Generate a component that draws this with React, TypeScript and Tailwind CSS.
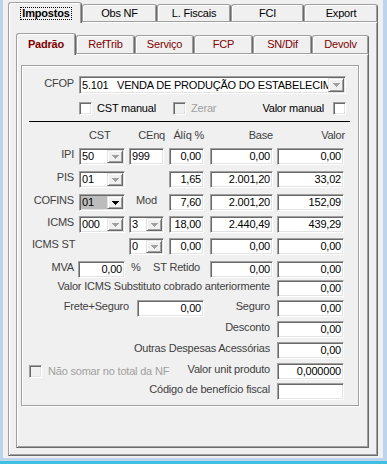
import React from "react";

const sunken =
  "border border-t-[#a0a0a0] border-l-[#a0a0a0] border-r-white border-b-white shadow-[inset_1px_1px_0_#696969,inset_-1px_-1px_0_#e3e3e3] p-[1px]";
const raised =
  "border border-t-[#a0a0a0] border-l-[#a0a0a0] border-r-[#696969] border-b-[#696969] shadow-[inset_1px_1px_0_#fff,inset_-1px_-1px_0_#a0a0a0] bg-[#f0f0f0]";
const tab =
  "border border-b-0 border-t-[#a0a0a0] border-l-[#a0a0a0] border-r-[#696969] rounded-t-[3px] bg-[#f0f0f0] shadow-[inset_1px_1px_0_#fff,inset_-1px_0_0_#a0a0a0]";
const btn =
  "border border-t-[#e3e3e3] border-l-[#e3e3e3] border-r-[#696969] border-b-[#696969] shadow-[inset_1px_1px_0_#fff,inset_-1px_-1px_0_#a0a0a0] bg-[#f0f0f0]";
const lbl = "text-[#404040] pb-[4px] whitespace-nowrap";

const OUTER_TABS = [
  { label: "Obs NF", w: "w-[75px]" },
  { label: "L. Fiscais", w: "w-[74px]" },
  { label: "FCI", w: "w-[73px]" },
  { label: "Export", w: "w-[74px]" },
];

const INNER_TABS = [
  { label: "RefTrib", w: "w-[59px]" },
  { label: "Serviço", w: "w-[59px]" },
  { label: "FCP", w: "w-[59px]" },
  { label: "SN/Dif", w: "w-[59px]" },
  { label: "Devolv", w: "w-[57px]" },
];

function Arrow({ dark }: { dark?: boolean }) {
  return (
    <svg width="7" height="4" shapeRendering="crispEdges" fill={dark ? "#000" : "#a0a0a0"}>
      <rect x="0" y="0" width="7" height="1" />
      <rect x="1" y="1" width="5" height="1" />
      <rect x="2" y="2" width="3" height="1" />
      <rect x="3" y="3" width="1" height="1" />
    </svg>
  );
}

function Combo({ value, size, dark, sel }: { value: string; size: string; dark?: boolean; sel?: boolean }) {
  return (
    <div className={`${sunken} ${size} flex bg-white`}>
      <div
        className={`flex-1 min-w-0 flex items-center pl-[1px] overflow-hidden whitespace-pre text-black ${
          sel ? "bg-[#bcbcbc]" : ""
        }`}
      >
        {value}
      </div>
      <div className={`${btn} w-[16px] shrink-0 flex items-center justify-center`}>
        <Arrow dark={dark} />
      </div>
    </div>
  );
}

function Box({ value, size, left }: { value?: string; size: string; left?: boolean }) {
  return (
    <div
      className={`${sunken} ${size} h-[17px] bg-white flex items-center whitespace-nowrap text-black ${
        left ? "justify-start pl-[2px]" : "justify-end pr-[2px]"
      }`}
    >
      {value}
    </div>
  );
}

function Check({ off }: { off?: boolean }) {
  return <div className={`${sunken} w-[13px] h-[13px] shrink-0 ${off ? "bg-[#f0f0f0]" : "bg-white"}`} />;
}

function Frame() {
  return (
    <div className="w-[338px] h-[341px] border border-[#a0a0a0] shadow-[inset_1px_1px_0_#fff,1px_1px_0_#fff] flex flex-col">
      {/* CFOP */}
      <div className="mt-[10px] h-[18px] flex items-center">
        <div className={`w-[52px] text-right ${lbl}`}>CFOP</div>
        <div className="ml-[5px]">
          <Combo size="w-[267px] h-[18px]" value="5.101   VENDA DE PRODUÇÃO DO ESTABELECIMENTO" />
        </div>
      </div>

      {/* checkboxes */}
      <div className="mt-[7px] h-[15px] flex items-center">
        <div className="w-[57px]" />
        <Check />
        <span className="ml-[5px] w-[76px]">CST manual</span>
        <Check off />
        <span className="ml-[5px] text-[#a0a0a0]">Zerar</span>
        <span className="ml-auto">Valor manual</span>
        <div className="ml-[9px] mr-[12px]">
          <Check />
        </div>
      </div>

      <div className="mt-[5px] ml-[7px] w-[321px] h-[1px] bg-black" />

      {/* headers */}
      <div className="mt-[6px] h-[14px] flex items-center text-[#404040] whitespace-nowrap">
        <div className="w-[57px]" />
        <div className="w-[46px] pl-[10px]">CST</div>
        <div className="ml-[4px] w-[36px] text-right">CEnq</div>
        <div className="ml-[4px] w-[35px] text-right">Álíq %</div>
        <div className="ml-[6px] w-[63px] text-right">Base</div>
        <div className="ml-[4px] w-[68px] text-right">Valor</div>
      </div>

      {/* IPI */}
      <div className="mt-[6px] h-[17px] flex items-center">
        <div className={`w-[52px] text-right ${lbl}`}>IPI</div>
        <div className="ml-[5px]">
          <Combo size="w-[46px] h-[17px]" value="50" />
        </div>
        <div className="ml-[4px]">
          <Box size="w-[35px]" value="999" left />
        </div>
        <div className="ml-[5px]">
          <Box size="w-[35px]" value="0,00" />
        </div>
        <div className="ml-[6px]">
          <Box size="w-[63px]" value="0,00" />
        </div>
        <div className="ml-[4px]">
          <Box size="w-[67px]" value="0,00" />
        </div>
      </div>

      {/* PIS */}
      <div className="mt-[6px] h-[17px] flex items-center">
        <div className={`w-[52px] text-right ${lbl}`}>PIS</div>
        <div className="ml-[5px]">
          <Combo size="w-[46px] h-[17px]" value="01" />
        </div>
        <div className="ml-[4px] w-[35px]" />
        <div className="ml-[5px]">
          <Box size="w-[35px]" value="1,65" />
        </div>
        <div className="ml-[6px]">
          <Box size="w-[63px]" value="2.001,20" />
        </div>
        <div className="ml-[4px]">
          <Box size="w-[67px]" value="33,02" />
        </div>
      </div>

      {/* COFINS */}
      <div className="mt-[6px] h-[17px] flex items-center">
        <div className={`w-[52px] text-right ${lbl}`}>COFINS</div>
        <div className="ml-[5px]">
          <Combo size="w-[46px] h-[17px]" value="01" dark sel />
        </div>
        <div className={`ml-[4px] w-[35px] text-center ${lbl}`}>Mod</div>
        <div className="ml-[5px]">
          <Box size="w-[35px]" value="7,60" />
        </div>
        <div className="ml-[6px]">
          <Box size="w-[63px]" value="2.001,20" />
        </div>
        <div className="ml-[4px]">
          <Box size="w-[67px]" value="152,09" />
        </div>
      </div>

      {/* ICMS */}
      <div className="mt-[5px] h-[17px] flex items-center">
        <div className={`w-[52px] text-right ${lbl}`}>ICMS</div>
        <div className="ml-[5px]">
          <Combo size="w-[46px] h-[17px]" value="000" />
        </div>
        <div className="ml-[4px]">
          <Combo size="w-[35px] h-[17px]" value="3" />
        </div>
        <div className="ml-[5px]">
          <Box size="w-[35px]" value="18,00" />
        </div>
        <div className="ml-[6px]">
          <Box size="w-[63px]" value="2.440,49" />
        </div>
        <div className="ml-[4px]">
          <Box size="w-[67px]" value="439,29" />
        </div>
      </div>

      {/* ICMS ST */}
      <div className="mt-[5px] h-[17px] flex items-center">
        <div className={`w-[107px] pl-[10px] ${lbl}`}>ICMS ST</div>
        <Combo size="w-[35px] h-[17px]" value="0" />
        <div className="ml-[5px]">
          <Box size="w-[35px]" value="0,00" />
        </div>
        <div className="ml-[6px]">
          <Box size="w-[63px]" value="0,00" />
        </div>
        <div className="ml-[4px]">
          <Box size="w-[67px]" value="0,00" />
        </div>
      </div>

      {/* MVA */}
      <div className="mt-[6px] h-[17px] flex items-center">
        <div className={`w-[52px] text-right ${lbl}`}>MVA</div>
        <div className="ml-[4px]">
          <Box size="w-[47px]" value="0,00" />
        </div>
        <div className={`w-[75px] flex justify-between pl-[6px] ${lbl}`}>
          <span>%</span>
          <span>ST Retido</span>
        </div>
        <div className="ml-[10px]">
          <Box size="w-[63px]" value="0,00" />
        </div>
        <div className="ml-[4px]">
          <Box size="w-[67px]" value="0,00" />
        </div>
      </div>

      <div className="mt-[2px] h-[17px] flex items-center">
        <div className={`w-[248px] text-right ${lbl}`}>Valor ICMS Substituto cobrado anteriormente</div>
        <div className="ml-[7px]">
          <Box size="w-[67px]" value="0,00" />
        </div>
      </div>

      <div className="mt-[3px] h-[17px] flex items-center">
        <div className={`w-[107px] text-right ${lbl}`}>Frete+Seguro</div>
        <div className="ml-[8px]">
          <Box size="w-[67px]" value="0,00" />
        </div>
        <div className={`w-[66px] text-right ${lbl}`}>Seguro</div>
        <div className="ml-[7px]">
          <Box size="w-[67px]" value="0,00" />
        </div>
      </div>

      <div className="mt-[4px] h-[17px] flex items-center">
        <div className={`w-[248px] text-right ${lbl}`}>Desconto</div>
        <div className="ml-[7px]">
          <Box size="w-[67px]" value="0,00" />
        </div>
      </div>

      <div className="mt-[4px] h-[17px] flex items-center">
        <div className={`w-[248px] text-right ${lbl}`}>Outras Despesas Acessórias</div>
        <div className="ml-[7px]">
          <Box size="w-[67px]" value="0,00" />
        </div>
      </div>

      <div className="mt-[4px] h-[17px] flex items-center">
        <div className="w-[248px] flex items-center">
          <div className="ml-[7px]">
            <Check off />
          </div>
          <span className="ml-[6px] text-[#a0a0a0] whitespace-nowrap">Não somar no total da NF</span>
          <span className={`ml-auto ${lbl}`}>Valor unit produto</span>
        </div>
        <div className="ml-[7px]">
          <Box size="w-[67px]" value="0,000000" />
        </div>
      </div>

      <div className="mt-[3px] h-[17px] flex items-center">
        <div className={`w-[248px] text-right ${lbl}`}>Código de benefício fiscal</div>
        <div className="ml-[7px]">
          <Box size="w-[67px]" />
        </div>
      </div>
    </div>
  );
}

export default function App() {
  return (
    <div className="w-[387px] h-[464px] bg-[#bdd4ec] flex flex-col font-['Liberation_Sans',Arial,sans-serif] text-[11px] tracking-[-0.2px] leading-[13px] text-black select-none">
      <div className="ml-[3px] w-[380px] h-[458px] bg-[#f0f0f0] pl-[5px] pt-[2px]">
        <div className="w-[370px]">
          {/* Outer tabs */}
          <div className="flex items-end h-[19px] relative z-10">
            <div className={`${tab} w-[74px] h-[21px] -mb-[2px] flex justify-center items-start pt-[4px] pl-[2px]`}>
              <span className="font-bold border border-dotted border-black px-[1px] leading-[11px]">Impostos</span>
            </div>
            {OUTER_TABS.map((t) => (
              <div key={t.label} className={`${tab} ${t.w} h-[17px] flex items-center justify-center`}>
                {t.label}
              </div>
            ))}
          </div>

          <div className={`${raised} h-[435px] pl-[7px] pt-[11px]`}>
            <div className="w-[353px]">
              {/* Inner tabs */}
              <div className="flex items-end h-[20px] relative z-10 text-[#800000]">
                <div className={`${tab} w-[60px] h-[22px] -mb-[2px] flex items-center justify-center pb-[1px] font-bold`}>
                  Padrão
                </div>
                {INNER_TABS.map((t) => (
                  <div key={t.label} className={`${tab} ${t.w} h-[18px] flex items-center justify-center`}>
                    {t.label}
                  </div>
                ))}
              </div>

              <div className={`${raised} h-[395px] pl-[4px] pt-[11px]`}>
                <Frame />
              </div>
            </div>
          </div>
        </div>
      </div>
      <div className="h-[3px]" />
      <div className="h-[3px] bg-[#3fc0e2]" />
    </div>
  );
}
